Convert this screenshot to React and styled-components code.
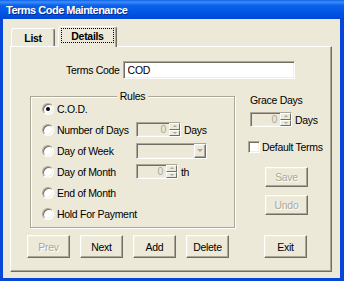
import React from 'react';
import styled, { createGlobalStyle, css } from 'styled-components';

const GlobalStyle = createGlobalStyle`
  * { box-sizing: border-box; }
  body {
    margin: 0;
    background: #ece9d8;
  }
`;

const sunken = css`
  border: 1px solid;
  border-color: #aca899 #fff #fff #aca899;
  box-shadow: inset 1px 1px 0 #716f64, inset -1px -1px 0 #f1efe2;
`;

const raised = css`
  border: 1px solid;
  border-color: #fff #716f64 #716f64 #fff;
  box-shadow: inset -1px -1px 0 #aca899, inset 1px 1px 0 #f1efe2;
`;

const Window = styled.div`
  width: 344px;
  height: 281px;
  display: flex;
  flex-direction: column;
  font-family: "Liberation Sans", Arial, sans-serif;
  font-size: 10.5px;
  letter-spacing: -0.3px;
  color: #000;
  white-space: nowrap;
`;

const TitleBar = styled.div`
  height: 19px;
  display: flex;
  align-items: center;
  padding-left: 6px;
  background: linear-gradient(180deg, #0b5fe6 0%, #3d8ff8 10%, #0c61ea 28%, #0056e6 65%, #0047d4 100%);
  color: #fff;
  font-size: 11px;
  font-weight: bold;
  letter-spacing: -0.5px;
  text-shadow: 1px 1px 0 #0a2a8a;
`;

const Body = styled.div`
  flex: 1;
  display: flex;
  flex-direction: column;
  background: #ece9d8;
  border-style: solid;
  border-color: #0846d9;
  border-width: 0 4px 3px 3px;
  padding: 7px 8px 6px 7px;
`;

const TabStrip = styled.div`
  height: 20px;
  display: flex;
  align-items: flex-end;
  gap: 3px;
  padding-left: 1px;
`;

const Tab = styled.div`
  position: relative;
  z-index: ${p => (p.$active ? 1 : 0)};
  width: ${p => p.$w}px;
  height: ${p => (p.$active ? 21 : 18)}px;
  margin-bottom: ${p => (p.$active ? -1 : 0)}px;
  display: flex;
  justify-content: center;
  align-items: ${p => (p.$active ? 'flex-start' : 'center')};
  padding-top: ${p => (p.$active ? 1 : 0)}px;
  background: #ece9d8;
  border-top: 1px solid #fff;
  border-left: 1px solid #fff;
  border-right: 1px solid #716f64;
  border-radius: 3px 3px 0 0;
  box-shadow: inset -1px 0 0 #aca899;
  font-weight: bold;
`;

const FocusRect = styled.span`
  width: 53px;
  height: 15px;
  display: flex;
  align-items: center;
  justify-content: center;
  border: 1px dotted #000;
`;

const Panel = styled.div`
  flex: 1;
  display: flex;
  flex-direction: column;
  padding-top: 14px;
  border-top: 1px solid #fff;
  border-left: 1px solid #fff;
  border-right: 1px solid #716f64;
  border-bottom: 1px solid #716f64;
  box-shadow: inset -1px -1px 0 #aca899;
`;

const CodeRow = styled.div`
  display: flex;
  align-items: center;
  gap: 3px;
  padding-left: 55px;
`;

const TextBox = styled.input`
  width: 172px;
  height: 18px;
  ${sunken};
  background: #fff;
  padding: 0 4px;
  font: inherit;
  letter-spacing: inherit;
  color: #000;
  outline: none;
`;

const Main = styled.div`
  display: grid;
  grid-template-columns: 205px auto;
  column-gap: 13px;
  margin-top: 17px;
  padding-left: 19px;
`;

const Group = styled.div`
  height: 132px;
  border: 1px solid #aca899;
  box-shadow: inset 1px 1px 0 #fff, 1px 1px 0 #fff;
`;

const Legend = styled.div`
  display: table;
  margin: -7px auto -4px;
  padding: 0 3px;
  line-height: 12px;
  background: #ece9d8;
`;

const Rows = styled.div`
  display: flex;
  flex-direction: column;
  padding-left: 11px;
`;

const Row = styled.div`
  height: 21px;
  display: grid;
  grid-template-columns: 94px auto;
  align-items: center;
`;

const Choice = styled.label`
  display: flex;
  align-items: center;
  gap: 3px;
`;

const Radio = styled.span`
  flex: none;
  width: 12px;
  height: 12px;
  border-radius: 50%;
  background: #fff;
  border: 1px solid;
  border-color: #aca899 #fff #fff #aca899;
  box-shadow: inset 1px 1px 0 #716f64, inset -1px -1px 0 #f1efe2;
  display: flex;
  align-items: center;
  justify-content: center;

  &::after {
    content: '';
    width: 4px;
    height: 4px;
    border-radius: 50%;
    background: ${p => (p.$checked ? '#000' : 'transparent')};
  }
`;

const Field = styled.div`
  display: flex;
  align-items: center;
  gap: 3px;
`;

const Spin = styled.div`
  width: ${p => p.$w}px;
  height: 15px;
  display: flex;
  ${sunken};
  background: #ece9d8;
`;

const SpinValue = styled.span`
  flex: 1;
  text-align: right;
  padding-right: 3px;
  line-height: 13px;
  color: #aca899;
`;

const SpinButtons = styled.div`
  width: 11px;
  display: flex;
  flex-direction: column;
`;

const SpinButton = styled.div`
  flex: 1;
  display: flex;
  align-items: center;
  justify-content: center;
  background: #ece9d8;
  ${raised};
  box-shadow: none;

  &::after {
    content: '';
    border-left: 2px solid transparent;
    border-right: 2px solid transparent;
    ${p => (p.$down ? 'border-top' : 'border-bottom')}: 2px solid #aca899;
  }
`;

const Combo = styled.div`
  width: 71px;
  height: 16px;
  display: flex;
  justify-content: flex-end;
  ${sunken};
  background: #ece9d8;
`;

const DropButton = styled.div`
  width: 12px;
  display: flex;
  align-items: center;
  justify-content: center;
  background: #ece9d8;
  ${raised};

  &::after {
    content: '';
    border-left: 3px solid transparent;
    border-right: 3px solid transparent;
    border-top: 3px solid #aca899;
  }
`;

const Side = styled.div`
  display: flex;
  flex-direction: column;
  align-items: flex-start;
`;

const SideLabel = styled.div`
  margin: -2px 0 0 2px;
  line-height: 12px;
`;

const SideSpin = styled(Field)`
  margin: 6px 0 0 2px;
`;

const CheckRow = styled.label`
  margin-top: 14px;
  display: flex;
  align-items: center;
  gap: 2px;
`;

const CheckBox = styled.span`
  width: 12px;
  height: 12px;
  ${sunken};
  background: #fff;
`;

const Button = styled.button`
  width: 43px;
  height: ${p => p.$h || 23}px;
  margin: ${p => p.$m || '0'};
  padding: 0;
  background: #ece9d8;
  ${raised};
  font: inherit;
  letter-spacing: inherit;
  color: ${p => (p.disabled ? '#aca899' : '#000')};
  text-shadow: ${p => (p.disabled ? '1px 1px 0 #fff' : 'none')};
`;

const ButtonRow = styled.div`
  display: flex;
  gap: 10px;
  margin-top: 7px;
  padding-left: 16px;
`;

const SpinBox = ({ w }) => (
  <Spin $w={w}>
    <SpinValue>0</SpinValue>
    <SpinButtons>
      <SpinButton />
      <SpinButton $down />
    </SpinButtons>
  </Spin>
);

const rules = [
  { label: 'C.O.D.', checked: true },
  { label: 'Number of Days', field: <><SpinBox w={45} /><span>Days</span></> },
  { label: 'Day of Week', field: <Combo><DropButton /></Combo> },
  { label: 'Day of Month', field: <><SpinBox w={42} /><span>th</span></> },
  { label: 'End of Month' },
  { label: 'Hold For Payment' },
];

export default function App() {
  return (
    <>
      <GlobalStyle />
      <Window>
        <TitleBar>Terms Code Maintenance</TitleBar>
        <Body>
          <TabStrip>
            <Tab $w={44}>List</Tab>
            <Tab $w={59} $active>
              <FocusRect>Details</FocusRect>
            </Tab>
          </TabStrip>
          <Panel>
            <CodeRow>
              <span>Terms Code</span>
              <TextBox readOnly defaultValue="COD" />
            </CodeRow>
            <Main>
              <Group>
                <Legend>Rules</Legend>
                <Rows>
                  {rules.map(r => (
                    <Row key={r.label}>
                      <Choice>
                        <Radio $checked={r.checked} />
                        {r.label}
                      </Choice>
                      {r.field && <Field>{r.field}</Field>}
                    </Row>
                  ))}
                </Rows>
              </Group>
              <Side>
                <SideLabel>Grace Days</SideLabel>
                <SideSpin>
                  <SpinBox w={42} />
                  <span>Days</span>
                </SideSpin>
                <CheckRow>
                  <CheckBox />
                  Default Terms
                </CheckRow>
                <Button $h={20} $m="14px 0 0 17px" disabled>Save</Button>
                <Button $h={20} $m="8px 0 0 17px" disabled>Undo</Button>
              </Side>
            </Main>
            <ButtonRow>
              <Button disabled>Prev</Button>
              <Button>Next</Button>
              <Button>Add</Button>
              <Button>Delete</Button>
              <Button $m="0 0 0 25px">Exit</Button>
            </ButtonRow>
          </Panel>
        </Body>
      </Window>
    </>
  );
}
